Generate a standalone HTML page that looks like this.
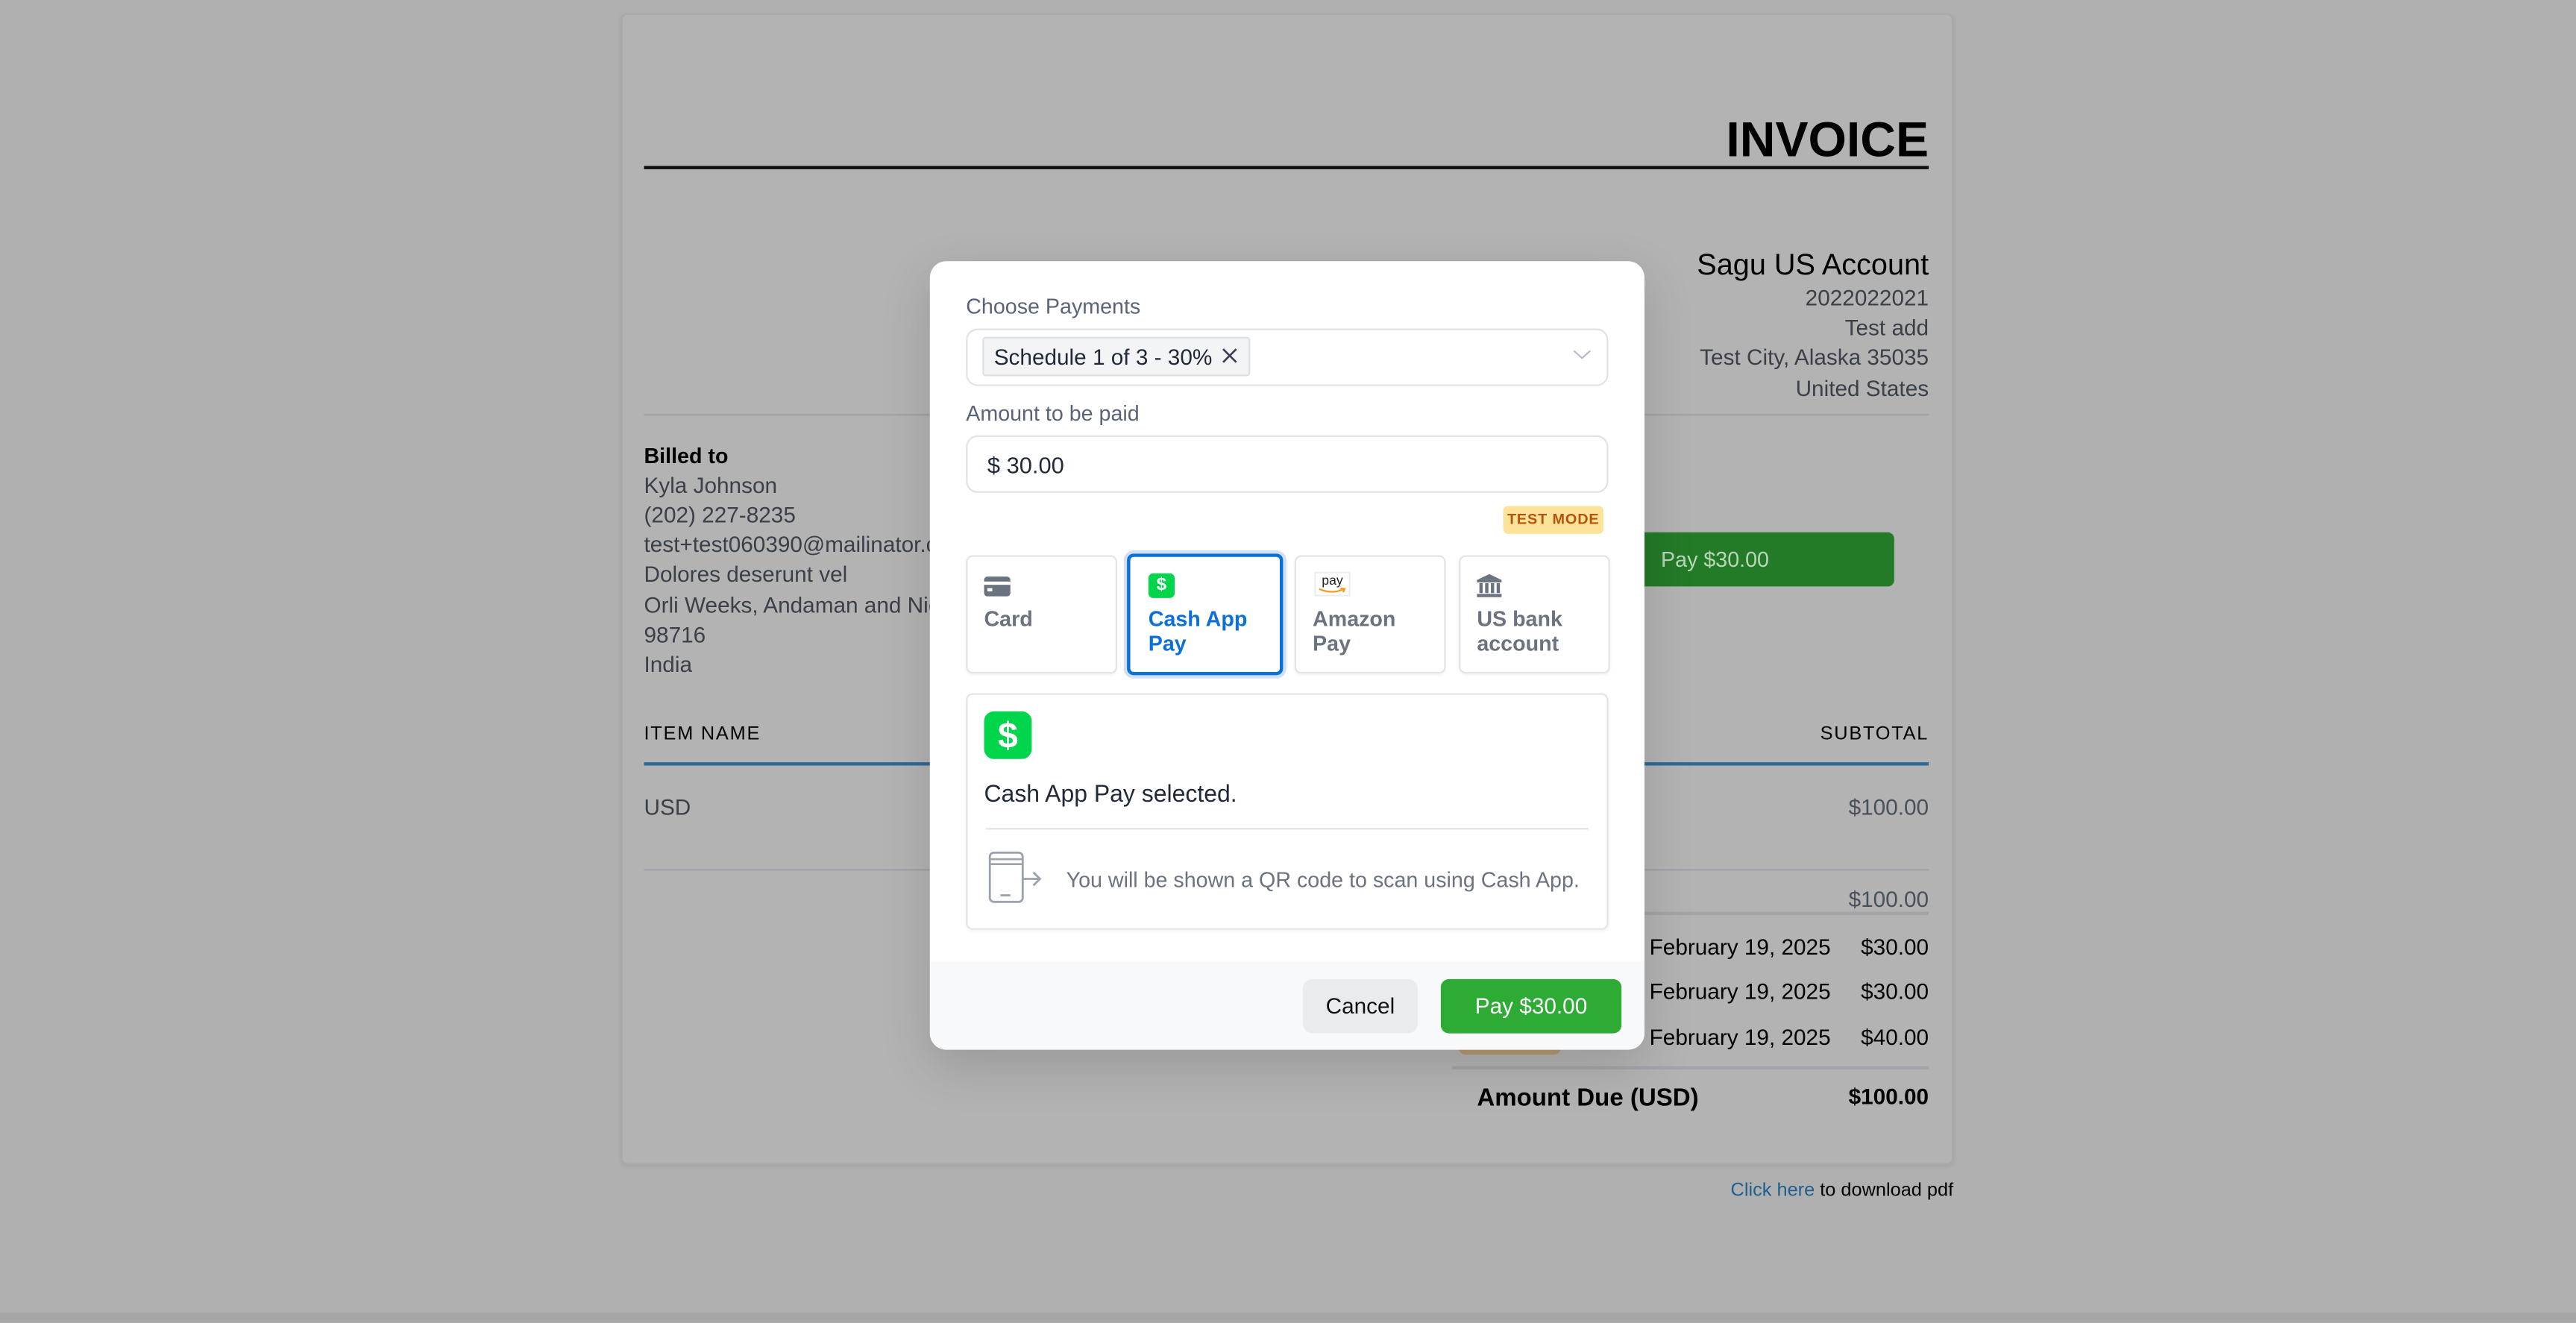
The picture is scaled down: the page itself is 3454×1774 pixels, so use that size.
<!DOCTYPE html>
<html><head><meta charset="utf-8">
<style>
*{box-sizing:border-box;margin:0;padding:0}
html,body{width:3454px;height:1774px;overflow:hidden;background:#b0b0b0;font-family:"Liberation Sans",sans-serif}
#w{position:absolute;left:0;top:0;width:1568px;height:805px;transform:scale(2.20281);transform-origin:0 0}
.a{position:absolute;white-space:nowrap}
.t{position:absolute;white-space:nowrap;line-height:18px;height:18px}
.r{text-align:right}
</style></head><body><div id="w">
<div class="a" style="left:378px;top:8px;width:811px;height:701px;background:#b3b3b3;border:1px solid #a9a9a9;border-radius:4px;box-shadow:0 1px 3px rgba(0,0,0,.08)"></div>
<div class="a" style="left:0;top:799px;width:1568px;height:6px;background:#a6a6a6"></div>
<div class="t r" style="right:394px;top:68px;height:36px;line-height:36px;font-size:30px;font-weight:bold;color:#000">INVOICE</div>
<div class="a" style="left:392px;top:101px;width:782px;height:1.5px;background:#111"></div>
<div class="t r" style="right:394px;top:150px;height:22px;line-height:22px;font-size:18px;color:#000">Sagu US Account</div>
<div class="t r" style="right:394px;top:173px;font-size:13.5px;color:#3a3f48">2022022021</div>
<div class="t r" style="right:394px;top:191px;font-size:13.5px;color:#3a3f48">Test add</div>
<div class="t r" style="right:394px;top:209px;font-size:13.5px;color:#3a3f48">Test City, Alaska 35035</div>
<div class="t r" style="right:394px;top:228px;font-size:13.5px;color:#3a3f48">United States</div>
<div class="a" style="left:392px;top:252px;width:782px;height:1px;background:#a2a2a6"></div>
<div class="t" style="left:392px;top:269px;font-size:13px;font-weight:600;color:#000">Billed to</div>
<div class="t" style="left:392px;top:287px;font-size:13.5px;color:#3a3f48">Kyla Johnson</div>
<div class="t" style="left:392px;top:305px;font-size:13.5px;color:#3a3f48">(202) 227-8235</div>
<div class="t" style="left:392px;top:323px;font-size:13.5px;color:#3a3f48">test+test060390@mailinator.com</div>
<div class="t" style="left:392px;top:341px;font-size:13.5px;color:#3a3f48">Dolores deserunt vel</div>
<div class="t" style="left:392px;top:360px;font-size:13.5px;color:#3a3f48">Orli Weeks, Andaman and Nicobar</div>
<div class="t" style="left:392px;top:378px;font-size:13.5px;color:#3a3f48">98716</div>
<div class="t" style="left:392px;top:396px;font-size:13.5px;color:#3a3f48">India</div>
<div class="a" style="left:990px;top:324px;width:163px;height:33px;background:#237a27;border-radius:4px;color:#b9d6b9;font-size:13px;line-height:33px;padding-left:21px">Pay $30.00</div>
<div class="t" style="left:392px;top:438px;font-size:11.5px;letter-spacing:.8px;color:#000">ITEM NAME</div>
<div class="t r" style="right:394px;top:438px;font-size:11.5px;letter-spacing:.8px;color:#000">SUBTOTAL</div>
<div class="a" style="left:392px;top:464px;width:782px;height:2px;background:#2c6a97"></div>
<div class="t" style="left:392px;top:483px;font-size:13.5px;color:#3a3f48">USD</div>
<div class="t r" style="right:394px;top:483px;font-size:13.5px;color:#4a505a">$100.00</div>
<div class="a" style="left:392px;top:529px;width:782px;height:1px;background:#a2a2a6"></div>
<div class="t r" style="right:394px;top:539px;font-size:13.5px;color:#4a505a">$100.00</div>
<div class="a" style="left:884px;top:555px;width:290px;height:2px;background:#a4a4a8"></div>
<div class="t" style="left:1004px;top:568px;font-size:13.5px;color:#000">February 19, 2025</div>
<div class="t r" style="right:394px;top:568px;font-size:13.5px;color:#000">$30.00</div>
<div class="t" style="left:1004px;top:595px;font-size:13.5px;color:#000">February 19, 2025</div>
<div class="t r" style="right:394px;top:595px;font-size:13.5px;color:#000">$30.00</div>
<div class="t" style="left:1004px;top:623px;font-size:13.5px;color:#000">February 19, 2025</div>
<div class="t r" style="right:394px;top:623px;font-size:13.5px;color:#000">$40.00</div>
<div class="a" style="left:888px;top:634px;width:62px;height:8px;background:#b49a70;border-radius:4px"></div>
<div class="a" style="left:884px;top:649px;width:290px;height:2px;background:#a4a4a8"></div>
<div class="t" style="left:899px;top:659px;height:20px;line-height:20px;font-size:15px;font-weight:bold;color:#000">Amount Due (USD)</div>
<div class="t r" style="right:394px;top:659px;font-size:13.5px;font-weight:bold;color:#000">$100.00</div>
<div class="t r" style="right:379px;top:716px;font-size:11.5px;color:#000"><span style="color:#1e5f8e">Click here</span> to download pdf</div>

<div class="a" style="left:566px;top:159px;width:435px;height:480px;background:#fff;border-radius:10px;overflow:hidden;box-shadow:0 10px 30px rgba(0,0,0,.15)">
 <div class="a" style="left:0;top:426px;width:435px;height:54px;background:#f8f9fb"></div>
</div>
<div class="t" style="left:588px;top:178px;font-size:13px;color:#5a6478">Choose Payments</div>
<div class="a" style="left:588px;top:200px;width:391px;height:35px;border:1px solid #dfe2e6;border-radius:7px;background:#fff"></div>
<div class="a" style="left:598px;top:205px;width:163px;height:24px;border:1px solid #dcdfe4;border-radius:2px;background:#f3f4f6;font-size:13.5px;line-height:23px;color:#1f2937;padding-left:6px">Schedule 1 of 3 - 30%</div>
<svg class="a" style="left:743px;top:211px" width="11" height="11" viewBox="0 0 11 11"><path d="M1.5 1.5L9.5 9.5M9.5 1.5L1.5 9.5" stroke="#374151" stroke-width="1.2"/></svg>
<svg class="a" style="left:957px;top:212px" width="12" height="8" viewBox="0 0 12 8"><path d="M1 1.5L6 6L11 1.5" stroke="#b8bcc4" stroke-width="1" fill="none"/></svg>
<div class="t" style="left:588px;top:243px;font-size:13px;color:#5a6478">Amount to be paid</div>
<div class="a" style="left:588px;top:265px;width:391px;height:35px;border:1px solid #dfe2e6;border-radius:7px;background:#fff;font-size:14px;line-height:34px;padding-left:12px;color:#1f2937">$ 30.00</div>
<div class="a" style="left:915px;top:308px;width:61px;height:17px;background:#fde29a;border-radius:3px;color:#b45309;font-size:9px;font-weight:bold;line-height:17px;text-align:center;letter-spacing:.4px">TEST MODE</div>
<div class="a" style="left:588px;top:338px;width:92px;height:72px;border:1px solid #e2e4e8;border-radius:4px;box-shadow:0 1px 2px rgba(0,0,0,.05)"></div>
<div class="a" style="left:599px;top:351px;width:16px;height:12px;background:#6b7280;border-radius:2px"></div>
<div class="a" style="left:599px;top:354px;width:16px;height:2px;background:#fff"></div>
<div class="a" style="left:601px;top:358px;width:3px;height:1.5px;background:#fff"></div>
<div class="t" style="left:599px;top:368px;font-size:13px;font-weight:bold;color:#6b7280">Card</div>

<div class="a" style="left:686px;top:337px;width:95px;height:74px;border:2px solid #0b6fdc;border-radius:4px;box-shadow:0 0 0 2px #cfe0f7"></div>
<div class="a" style="left:699px;top:349px;width:16px;height:15px;background:#00d54b;border-radius:3px;color:#fff;font-size:11px;font-weight:bold;line-height:15px;text-align:center">$</div>
<div class="a" style="left:699px;top:369px;font-size:13px;font-weight:bold;color:#0b6fdc;line-height:15px">Cash App<br>Pay</div>

<div class="a" style="left:788px;top:338px;width:92px;height:72px;border:1px solid #e2e4e8;border-radius:4px;box-shadow:0 1px 2px rgba(0,0,0,.05)"></div>
<div class="a" style="left:800px;top:348px;width:22px;height:15px;border:1px solid #eee;background:#fff;font-size:8px;line-height:10px;text-align:center;color:#222">pay</div>
<svg class="a" style="left:802px;top:357px" width="18" height="5" viewBox="0 0 18 5"><path d="M1 1.5Q9 5 16 1.5M14 1L16.5 1.5L15.5 3.5" stroke="#f49a1a" stroke-width="1" fill="none"/></svg>
<div class="a" style="left:799px;top:369px;font-size:13px;font-weight:bold;color:#6b7280;line-height:15px">Amazon<br>Pay</div>

<div class="a" style="left:888px;top:338px;width:92px;height:72px;border:1px solid #e2e4e8;border-radius:4px;box-shadow:0 1px 2px rgba(0,0,0,.05)"></div>
<svg class="a" style="left:898px;top:349px" width="17" height="15" viewBox="0 0 17 15"><path d="M8.5 0.5L16 4H1Z" fill="#6b7280"/><rect x="1" y="4" width="15" height="1.5" fill="#6b7280"/><rect x="2.5" y="6" width="2" height="6" fill="#6b7280"/><rect x="6" y="6" width="2" height="6" fill="#6b7280"/><rect x="9.5" y="6" width="2" height="6" fill="#6b7280"/><rect x="13" y="6" width="2" height="6" fill="#6b7280"/><rect x="1" y="12.5" width="15" height="2" fill="#6b7280"/></svg>
<div class="a" style="left:899px;top:369px;font-size:13px;font-weight:bold;color:#6b7280;line-height:15px">US bank<br>account</div>
<div class="a" style="left:588px;top:422px;width:391px;height:144px;border:1px solid #e2e4e8;border-radius:4px;box-shadow:0 1px 2px rgba(0,0,0,.05)"></div>
<div class="a" style="left:599px;top:433px;width:29px;height:29px;background:#00d54b;border-radius:6px;color:#fff;font-size:22px;font-weight:bold;line-height:29px;text-align:center">$</div>
<div class="t" style="left:599px;top:475px;font-size:14.5px;color:#1f2937">Cash App Pay selected.</div>
<div class="a" style="left:600px;top:504px;width:367px;height:1px;background:#e2e4e8"></div>
<svg class="a" style="left:601px;top:518px" width="34" height="33" viewBox="0 0 34 33"><rect x="1.5" y="1" width="20" height="30" rx="2.5" fill="none" stroke="#9ca3af" stroke-width="1.3"/><path d="M1.5 5H21.5M1.5 8H21.5" stroke="#9ca3af" stroke-width="1.2"/><path d="M8 27H14" stroke="#9ca3af" stroke-width="1.3"/><rect x="14" y="10" width="6" height="14" fill="#fff"/><path d="M21.5 17H32M28 13L32 17L28 21" stroke="#9ca3af" stroke-width="1.3" fill="none"/></svg>
<div class="t" style="left:649px;top:527px;font-size:13px;color:#6b7280">You will be shown a QR code to scan using Cash App.</div>
<div class="a" style="left:793px;top:596px;width:70px;height:33px;background:#e9ebee;border-radius:6px;font-size:13.5px;line-height:33px;text-align:center;color:#111">Cancel</div>
<div class="a" style="left:877px;top:596px;width:110px;height:33px;background:#2eab34;border-radius:5px;font-size:13.5px;line-height:33px;text-align:center;color:#fff">Pay $30.00</div>
</div></body></html>
